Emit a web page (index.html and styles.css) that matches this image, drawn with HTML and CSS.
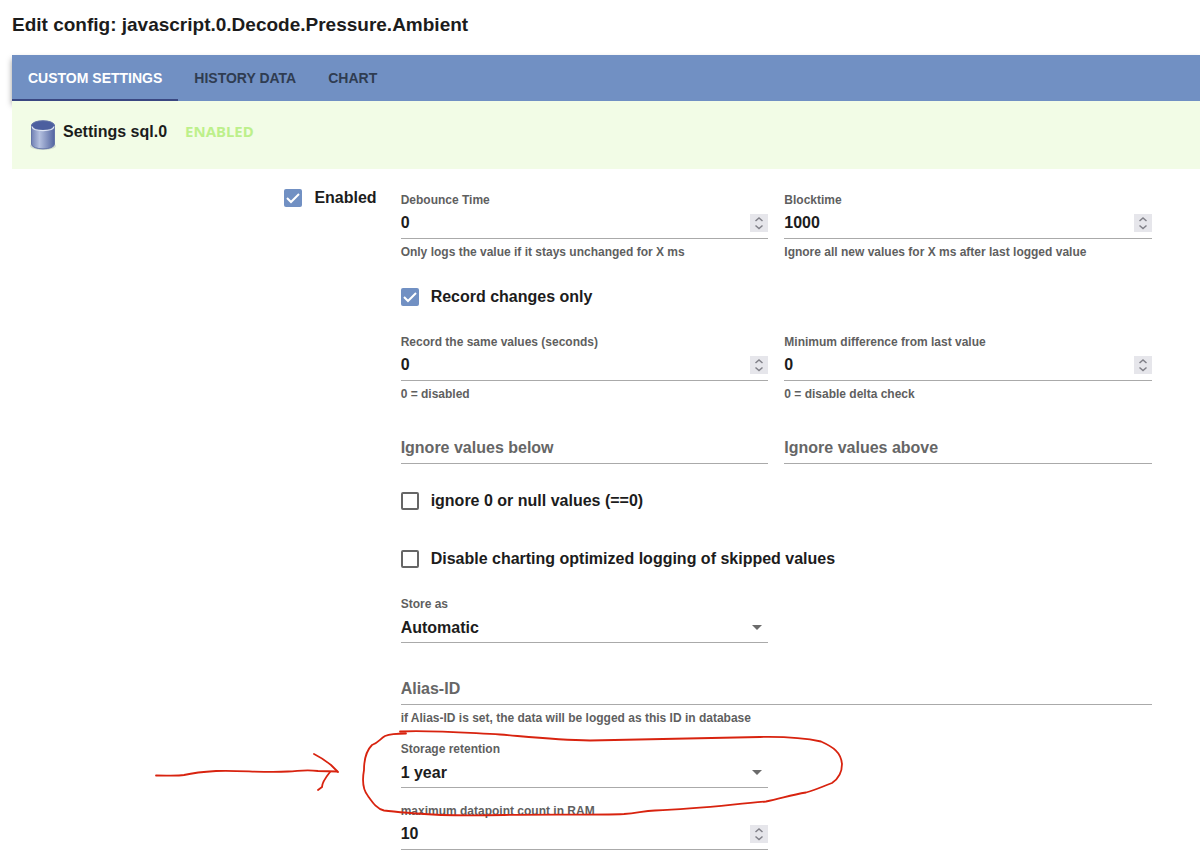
FILE: index.html
```html
<!DOCTYPE html>
<html lang="en">
<head>
  <meta charset="UTF-8" />
  <meta name="viewport" content="width=device-width, initial-scale=1.0"/>
  <title>Edit config</title>
  <link rel="stylesheet" href="styles.css">
</head>
<body>
<h1>Edit config: javascript.0.Decode.Pressure.Ambient</h1>
<nav class="tabs">
  <button class="tab active">CUSTOM SETTINGS</button>
  <button class="tab">HISTORY DATA</button>
  <button class="tab">CHART</button>
</nav>
<header class="panel-head">
  <svg class="db-icon" width="28" height="32" viewBox="0 0 28 32">
    <defs>
      <linearGradient id="side">
        <stop offset="0" stop-color="#7181b4"/>
        <stop offset="0.35" stop-color="#b4c0df"/>
        <stop offset="1" stop-color="#5365a0"/>
      </linearGradient>
    </defs>
    <ellipse cx="14" cy="27" rx="13" ry="4" fill="#d5dfd0"/>
    <path d="M2.500 6v19c0 6.500 23 6.500 23 0V6z" fill="url(#side)" stroke="#6474a8"/>
    <ellipse cx="14" cy="6.500" rx="11.500" ry="4.800" fill="#4c5f9f" stroke="#6474a8"/>
    <path d="M3 7.500c1 5.500 21 5.500 22 0" fill="none" stroke="#dfe6f5" stroke-width="1.300"/>
  </svg>
  <h2>Settings sql.0</h2>
  <span class="status">ENABLED</span>
</header>

<form class="settings">
  <div class="side">
    <label class="check"><input type="checkbox" checked> Enabled</label>
  </div>
  <div class="fields">
    <div class="row">
      <div class="field">
        <label for="debounce">Debounce Time</label>
        <div class="control">
          <input id="debounce" type="number" value="0">
          <svg class="spin" viewBox="0 0 18 18"><path d="M5.500 7L9 4l3.500 3M5.500 11.500l3.500 3 3.500-3"/></svg>
        </div>
        <p>Only logs the value if it stays unchanged for X ms</p>
      </div>
      <div class="field">
        <label for="blocktime">Blocktime</label>
        <div class="control">
          <input id="blocktime" type="number" value="1000">
          <svg class="spin" viewBox="0 0 18 18"><path d="M5.500 7L9 4l3.500 3M5.500 11.500l3.500 3 3.500-3"/></svg>
        </div>
        <p>Ignore all new values for X ms after last logged value</p>
      </div>
    </div>
    <label class="check spaced"><input type="checkbox" checked> Record changes only</label>
    <div class="row spaced">
      <div class="field">
        <label for="same">Record the same values (seconds)</label>
        <div class="control">
          <input id="same" type="number" value="0">
          <svg class="spin" viewBox="0 0 18 18"><path d="M5.500 7L9 4l3.500 3M5.500 11.500l3.500 3 3.500-3"/></svg>
        </div>
        <p>0 = disabled</p>
      </div>
      <div class="field">
        <label for="mindiff">Minimum difference from last value</label>
        <div class="control">
          <input id="mindiff" type="number" value="0">
          <svg class="spin" viewBox="0 0 18 18"><path d="M5.500 7L9 4l3.500 3M5.500 11.500l3.500 3 3.500-3"/></svg>
        </div>
        <p>0 = disable delta check</p>
      </div>
    </div>
    <div class="row apart">
      <div class="control"><input type="text" placeholder="Ignore values below" aria-label="Ignore values below"></div>
      <div class="control"><input type="text" placeholder="Ignore values above" aria-label="Ignore values above"></div>
    </div>
    <label class="check spaced"><input type="checkbox"> ignore 0 or null values (==0)</label>
    <label class="check far"><input type="checkbox"> Disable charting optimized logging of skipped values</label>
    <div class="row spaced">
      <div class="field">
        <label for="store">Store as</label>
        <div class="control">
          <select id="store"><option>Automatic</option></select>
          <svg class="arrow" viewBox="0 0 10 5"><path d="M0 0h10L5 5z"/></svg>
        </div>
      </div>
    </div>
    <div class="field apart">
      <div class="control"><input type="text" placeholder="Alias-ID" aria-label="Alias-ID"></div>
      <p>if Alias-ID is set, the data will be logged as this ID in database</p>
    </div>
    <div class="row close">
      <div class="field">
        <label for="retention">Storage retention</label>
        <div class="control">
          <select id="retention"><option>1 year</option></select>
          <svg class="arrow" viewBox="0 0 10 5"><path d="M0 0h10L5 5z"/></svg>
        </div>
      </div>
    </div>
    <div class="row close">
      <div class="field">
        <label for="maxram">maximum datapoint count in RAM</label>
        <div class="control">
          <input id="maxram" type="number" value="10">
          <svg class="spin" viewBox="0 0 18 18"><path d="M5.500 7L9 4l3.500 3M5.500 11.500l3.500 3 3.500-3"/></svg>
        </div>
      </div>
    </div>
  </div>
</form>

<!-- red pen marks -->
<svg class="marks" width="860" height="862" viewBox="0 0 860 862">
  <path d="M156 775.500C170 775.500 178 776 184 775C193 773 200 772 216 771C240 770 262 773 288 771.500C300 771 305 769.500 318 771L337 771.500"/>
  <path d="M314 754C320 757 326 761 331 765L338 772M330 772C326 777 322 782 322 787L318 790"/>
  <path d="M406 733.500C396 733.500 390 734 385 736C380 739 378 743 372 745C366 751 364 761 364 770C362 781 363 790 368 796C373 803 377 809 384 810.500C395 812 405 812.500 417 813.500C445 816 480 815.500 504 815C550 814.500 603 815 624 814C638 813 643 811 655 810.500C700 809 730 804.500 766 801.500C780 799 790 795 806 792.500C816 790 821 787 832 783C841 777 842 770 842 764C841 752 833 747 821 741.500C805 738 785 736.500 760 737C710 737.500 660 739.500 590 740.500C555 740 520 736 500 734.500C460 732.500 430 730 400 731.500"/>
</svg>
</body>
</html>
```
FILE: styles.css
```css
body {
  margin: 0;
  padding: 0 0 12px 12px;
  background: #fff;
  color: #1c1c1c;
  font-family: "Liberation Sans", Arial, sans-serif;
  font-size: 16px;
  font-weight: bold;
}
h1 {
  margin: 0;
  padding: 13px 0 18px;
  font-size: 19px;
  line-height: 24px;
}
.tabs {
  display: flex;
  height: 46px;
  background-color: #7190c3;
  box-shadow: 0 4px 6px rgba(0, 0, 0, 0.4);
}
.tab {
  padding: 0 16px;
  border: none;
  background: none;
  color: #2f3c51;
  font: inherit;
  font-size: 14px;
  cursor: pointer;
}
.tab.active {
  color: #fff;
  box-shadow: inset 0 -2px #3a4781;
}
.panel-head {
  position: relative;
  display: flex;
  align-items: flex-start;
  height: 50px;
  padding: 18px 17px 0;
  background-color: #f2fce6;
}
.db-icon {
  margin-right: 6px;
}
.panel-head h2 {
  margin: 3px 18px 0 0;
  font-size: 16px;
  line-height: 20px;
}
.status {
  margin-top: 2px;
  color: #bdf08b;
  font-family: "Noto Sans", sans-serif;
  font-size: 15px;
  line-height: 20px;
}
.settings {
  display: grid;
  grid-template-columns: 15fr 29fr;
  margin: 17px 48px 0 0;
}
.side {
  display: flex;
  justify-content: flex-end;
  align-items: flex-start;
  padding-right: 24px;
}
.fields {
  padding-top: 6px;
}
.check {
  display: flex;
  align-items: center;
  gap: 12px;
  height: 24px;
}
.check input {
  appearance: none;
  width: 18px;
  height: 18px;
  margin: 0;
  border: 2px solid #666;
  border-radius: 2px;
}
.check input:checked {
  border: none;
  background: #7190c3 url("data:image/svg+xml,%3Csvg xmlns='http://www.w3.org/2000/svg' viewBox='0 0 18 18'%3E%3Cpath d='M3 9l4 4 8-8' fill='none' stroke='white' stroke-width='2'/%3E%3C/svg%3E");
}
.row {
  display: grid;
  grid-template-columns: 1fr 1fr;
  gap: 16px;
}
.close {
  margin-top: 15px;
}
.spaced {
  margin-top: 25px;
}
.apart {
  margin-top: 31px;
}
.far {
  margin-top: 34px;
}
.field label {
  display: block;
  color: #5f5f5f;
  font-size: 12px;
  line-height: 16px;
}
.field p {
  margin: 5px 0 0;
  color: #5f5f5f;
  font-size: 12px;
  line-height: 16px;
}
.control {
  display: flex;
  align-items: center;
  height: 30px;
  border-bottom: 1px solid #aaa;
}
.control input,
.control select {
  flex: 1;
  min-width: 0;
  padding: 0;
  border: none;
  outline: none;
  background: none;
  color: inherit;
  font: inherit;
  appearance: none;
}
.control input[type="number"] {
  appearance: textfield;
}
.control input::placeholder {
  color: #666;
  opacity: 1;
}
.spin {
  width: 18px;
  height: 18px;
  background-color: #e6e6eb;
  fill: none;
  stroke: #808088;
  stroke-width: 1.5;
}
.arrow {
  width: 10px;
  height: 5px;
  margin-right: 6px;
  fill: #6b6b6b;
}
.marks {
  position: absolute;
  top: 0;
  left: 0;
  fill: none;
  stroke: #d8230f;
  stroke-width: 1.8;
  stroke-linecap: round;
  pointer-events: none;
}
```
